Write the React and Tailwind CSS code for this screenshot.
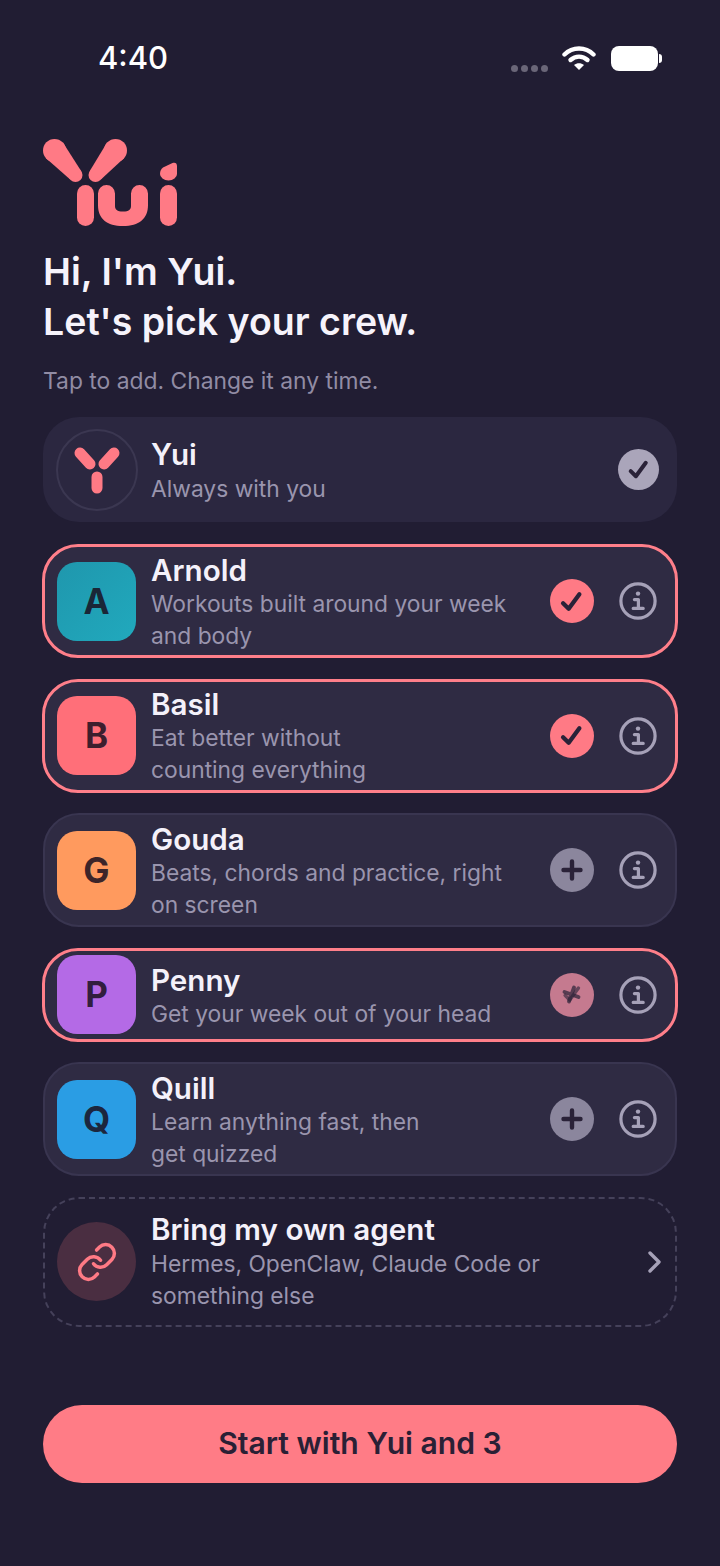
import React from 'react'

const font = { fontFamily: 'Inter, "Noto Sans", sans-serif' }

const agents = [
  { name: 'Arnold', letter: 'A', tile: 'bg-gradient-to-br from-[#1f97ad] to-[#21a9bd]', lines: ['Workouts built around your week', 'and body'], state: 'on' },
  { name: 'Basil', letter: 'B', tile: 'bg-[#ff6f79]', lines: ['Eat better without', 'counting everything'], state: 'on' },
  { name: 'Gouda', letter: 'G', tile: 'bg-[#ff9a5e]', lines: ['Beats, chords and practice, right', 'on screen'], state: 'off' },
  { name: 'Penny', letter: 'P', tile: 'bg-[#b46ae6]', lines: ['Get your week out of your head'], state: 'turning' },
  { name: 'Quill', letter: 'Q', tile: 'bg-[#2a9de4]', lines: ['Learn anything fast, then', 'get quizzed'], state: 'off' },
]

function Check({ size = 27 }) {
  return (
    <svg width={size} height={size} viewBox="0 0 24 24" fill="none" stroke="#2a2238" strokeWidth="3.8" strokeLinecap="round" strokeLinejoin="round">
      <path d="M4.500 13.500l5 5L19 5.500" />
    </svg>
  )
}

function Plus({ size = 24 }) {
  return (
    <svg width={size} height={size} viewBox="0 0 24 24" fill="none" stroke="#2a2238" strokeWidth="4.4" strokeLinecap="round">
      <path d="M12 3.500v17M3.500 12h17" />
    </svg>
  )
}

function InfoIcon() {
  return (
    <svg width="38" height="38" viewBox="0 0 38 38" fill="none" stroke="#a6a1b8" strokeWidth="3.2" strokeLinecap="round" strokeLinejoin="round">
      <circle cx="19" cy="19" r="17.1" />
      <path d="M19 11.600h.02" strokeWidth="4.400" />
      <path d="M15.400 17.600H19.400V26.400M14.200 26.400h10" />
    </svg>
  )
}

function StateButton({ state }) {
  if (state === 'on') {
    return (
      <div className="flex h-[44px] w-[44px] shrink-0 items-center justify-center rounded-full bg-[#ff7a85]">
        <Check />
      </div>
    )
  }
  if (state === 'turning') {
    return (
      <div className="relative flex h-[44px] w-[44px] shrink-0 items-center justify-center rounded-full bg-[#c57a8f]">
        <div className="rotate-[20deg] opacity-70"><Plus size={21} /></div>
        <div className="absolute left-[11px] top-[10px] opacity-60"><Check size={22} /></div>
      </div>
    )
  }
  return (
    <div className="flex h-[44px] w-[44px] shrink-0 items-center justify-center rounded-full bg-[#8b869d]">
      <Plus />
    </div>
  )
}

function Ear({ top, bottom, r1, r2 }) {
  const dx = bottom[0] - top[0]
  const dy = bottom[1] - top[1]
  const len = Math.hypot(dx, dy)
  const nx = dy / len
  const ny = -dx / len
  const pts = [
    [top[0] + nx * r1, top[1] + ny * r1],
    [bottom[0] + nx * r2, bottom[1] + ny * r2],
    [bottom[0] - nx * r2, bottom[1] - ny * r2],
    [top[0] - nx * r1, top[1] - ny * r1],
  ]
  return (
    <g>
      <circle cx={top[0]} cy={top[1]} r={r1} />
      <circle cx={bottom[0]} cy={bottom[1]} r={r2} />
      <polygon points={pts.map((p) => p.join(',')).join(' ')} />
    </g>
  )
}

function Logo() {
  return (
    <svg width="136" height="88" viewBox="0 0 136 88" fill="#ff7a85">
      <Ear top={[11.5, 11.5]} bottom={[32.5, 36]} r1={11.5} r2={7} />
      <Ear top={[72.5, 11.5]} bottom={[52.5, 36]} r1={11.5} r2={7} />
      <rect x="34" y="46" width="17" height="41" rx="8.500" />
      <path d="M55 54.500a8.500 8.500 0 0 1 17 0V67c0 3.500 2 5.500 8 5.500s8-2 8-5.500V54.500a8.500 8.500 0 0 1 17 0V66c0 14-9 21-25 21s-25-7-25-21z" />
      <rect x="117" y="46" width="17" height="41" rx="8.500" />
      <path d="M117 35c0-3 1-5 3-6.500l9.500-4.500c2.500-1 4.500 0 4.500 3v8a8.500 6.500 0 0 1-17 0z" />
    </svg>
  )
}

function Card({ agent }) {
  const selected = agent.state !== 'off'
  return (
    <div className={`flex items-center rounded-[36px] bg-[#2f2b43] pr-[18.5px] ${selected ? '-mx-[1px] min-h-[94px] border-[3px] border-[#ff7f8a] py-[3.5px] pl-[12px]' : 'border-2 border-[#393550] py-[4.5px] pl-[12px]'}`}>
      <div className={`flex h-[79px] w-[79px] shrink-0 items-center justify-center rounded-[20px] text-[35px] font-bold text-[#1a1020]/85 ${agent.tile}`}>
        {agent.letter}
      </div>
      <div className={`ml-[15px] min-w-0 flex-1 ${agent.lines.length === 1 ? 'pt-[4px]' : 'pt-[2px]'}`}>
        <div className="text-[29.6px] font-semibold leading-[35px] text-[#f4f1fa]">{agent.name}</div>
        {agent.lines.map((l) => (
          <div key={l} className="whitespace-nowrap text-[22.8px] leading-[32px] text-[#9a95ae]">{l}</div>
        ))}
      </div>
      <div className="flex items-center gap-[25px]">
        <StateButton state={agent.state} />
        <InfoIcon />
      </div>
    </div>
  )
}

export default function App() {
  return (
    <div className="flex h-[1566px] w-[720px] flex-col overflow-hidden bg-[#211d33] px-[43px]" style={font}>
      {/* status bar */}
      <div className="mt-[38px] flex h-[40px] items-center justify-between pl-[55px] pr-[15px]">
        <span className="text-[31px] font-medium text-white">4:40</span>
        <div className="flex items-center">
          <div className="mr-[14px] mt-[20px] flex gap-[3px]">
            <span className="h-[7px] w-[7px] rounded-full bg-[#6a6678]" />
            <span className="h-[7px] w-[7px] rounded-full bg-[#6a6678]" />
            <span className="h-[7px] w-[7px] rounded-full bg-[#6a6678]" />
            <span className="h-[7px] w-[7px] rounded-full bg-[#6a6678]" />
          </div>
          <svg width="34" height="26" viewBox="0 0 34 26" fill="none" stroke="#fff" strokeWidth="4.400" strokeLinecap="round">
            <path d="M2.500 9.500C10.500 1.500 23.500 1.500 31.500 9.500" />
            <path d="M8.500 15C13.500 10.500 20.500 10.500 25.500 15" />
            <path d="M17 25l-5-5c3-2.400 7-2.400 10 0z" fill="#fff" stroke="none" />
          </svg>
          <div className="ml-[15px] h-[25px] w-[47px] rounded-[8px] bg-white" />
          <div className="ml-[1px] h-[9px] w-[3px] rounded-r-full bg-white" />
        </div>
      </div>

      <div className="mt-[61px]"><Logo /></div>

      <h1 className="mt-[20px] text-[37.5px] font-semibold leading-[50px] text-[#f6f3fb]">
        Hi, I'm Yui.<br />Let's pick your crew.
      </h1>
      <p className="mt-[17.5px] text-[22.85px] leading-[32px] text-[#918ca4]">Tap to add. Change it any time.</p>

      {/* crew list */}
      <div className="mt-[20.5px] flex flex-col gap-[20.5px]">
        <div className="mb-[1.5px] flex items-center rounded-[36px] bg-[#2b2740] py-[11.5px] pl-[13px] pr-[18.5px]">
          <div className="flex h-[82px] w-[82px] shrink-0 items-center justify-center rounded-full border-2 border-[#3b3751]">
            <svg width="78" height="78" viewBox="0 0 78 78" fill="none" stroke="#ff7a85" strokeWidth="11" strokeLinecap="round">
              <path d="M22 22l10 11M56 22L46 33M39 46v11" />
            </svg>
          </div>
          <div className="ml-[13px] flex-1 pt-[3px]">
            <div className="text-[29.6px] font-semibold leading-[35px] text-[#f4f1fa]">Yui</div>
            <div className="mt-[1px] text-[22.8px] leading-[32px] text-[#9a95ae]">Always with you</div>
          </div>
          <div className="flex h-[41px] w-[41px] items-center justify-center rounded-full bg-[#aaa5ba]">
            <Check size={25} />
          </div>
        </div>

        {agents.map((a) => (
          <Card key={a.name} agent={a} />
        ))}

        <div className="flex items-center rounded-[36px] border-2 border-dashed border-[#45415a] py-[13px] pl-[12px] pr-[10px]">
          <div className="flex h-[79px] w-[79px] shrink-0 items-center justify-center rounded-full bg-[#4a2e41]">
            <svg width="42" height="42" viewBox="0 0 24 24" fill="none" stroke="#ff7a85" strokeWidth="2" strokeLinecap="round" strokeLinejoin="round">
              <path d="M10 13a5 5 0 0 0 7.54.54l3-3a5 5 0 0 0-7.07-7.07l-1.72 1.71" />
              <path d="M14 11a5 5 0 0 0-7.54-.54l-3 3a5 5 0 0 0 7.07 7.07l1.71-1.71" />
            </svg>
          </div>
          <div className="ml-[15px] flex-1">
            <div className="text-[29.6px] font-semibold leading-[35px] text-[#f4f1fa]">Bring my own agent</div>
            <div className="mt-[1px] text-[22.8px] leading-[32px] text-[#9a95ae]">Hermes, OpenClaw, Claude Code or</div>
            <div className="text-[22.8px] leading-[32px] text-[#9a95ae]">something else</div>
          </div>
          <svg width="20" height="28" viewBox="0 0 20 28" fill="none" stroke="#a6a1b8" strokeWidth="3.400" strokeLinecap="round" strokeLinejoin="round">
            <path d="M5 5l9 9-9 9" />
          </svg>
        </div>
      </div>

      <button className="mt-[78px] flex h-[78px] w-full items-center justify-center rounded-full bg-[#ff7c86] pt-[1px] text-[30.1px] font-semibold text-[#2a2035]">
        Start with Yui and 3
      </button>
    </div>
  )
}
